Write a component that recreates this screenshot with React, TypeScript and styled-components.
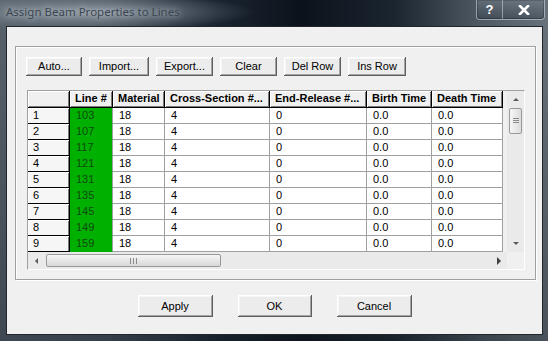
import React from 'react'
import styled, { createGlobalStyle } from 'styled-components'

const GlobalStyle = createGlobalStyle`
  html, body {
    margin: 0;
    padding: 0;
    background: #1d2731;
  }
  body {
    font-family: "Liberation Sans", Arial, sans-serif;
  }
`

type Row = { n: number; line: number }

const rows: Row[] = [
  { n: 1, line: 103 },
  { n: 2, line: 107 },
  { n: 3, line: 117 },
  { n: 4, line: 121 },
  { n: 5, line: 131 },
  { n: 6, line: 135 },
  { n: 7, line: 145 },
  { n: 8, line: 149 },
  { n: 9, line: 159 },
]

const headers = ['Line #', 'Material', 'Cross-Section #...', 'End-Release #...', 'Birth Time', 'Death Time']

const toolButtons = [
  { label: 'Auto...', w: 56 },
  { label: 'Import...', w: 60 },
  { label: 'Export...', w: 57 },
  { label: 'Clear', w: 57 },
  { label: 'Del Row', w: 57 },
  { label: 'Ins Row', w: 58 },
]

const Arrow: React.FC<{ dir: 'up' | 'down' | 'left' | 'right' }> = ({ dir }) => {
  const pts = {
    up: '1,5 4,2 7,5',
    down: '1,2 4,5 7,2',
    left: '5,1 2,4 5,7',
    right: '2,0 6,4 2,8',
  }[dir]
  return (
    <svg width="8" height="8" viewBox="0 0 8 8">
      <polygon points={pts} fill={dir === 'right' ? '#404040' : '#5a5a5a'} />
    </svg>
  )
}

export default function App() {
  return (
    <>
      <GlobalStyle />
      <Window>
        <TitleBar>
          <Title>Assign Beam Properties to Lines</Title>
          <Caption>
            <CapButton $w={25}>?</CapButton>
            <CapButton $w={41}>
              <svg width="12" height="10" viewBox="0 0 12 10">
                <path d="M2 1 L10 9 M10 1 L2 9" stroke="#fff" strokeWidth="2.6" strokeLinecap="square" />
              </svg>
            </CapButton>
          </Caption>
        </TitleBar>
        <Frame>
          <Client>
            <Group>
              <ToolRow>
                {toolButtons.map((b) => (
                  <Button key={b.label} $w={b.w} $h={19}>
                    {b.label}
                  </Button>
                ))}
              </ToolRow>
              <GridBox>
                <Table>
                  <HeadCell />
                  {headers.map((h) => (
                    <HeadCell key={h}>{h}</HeadCell>
                  ))}
                  {rows.map((r) => (
                    <React.Fragment key={r.n}>
                      <RowHead>{r.n}</RowHead>
                      <Cell $green>{r.line}</Cell>
                      <Cell>18</Cell>
                      <Cell>4</Cell>
                      <Cell>0</Cell>
                      <Cell>0.0</Cell>
                      <Cell>0.0</Cell>
                    </React.Fragment>
                  ))}
                </Table>
                <VScroll>
                  <ArrowBox>
                    <Arrow dir="up" />
                  </ArrowBox>
                  <VTrack>
                    <VThumb>
                      <svg width="6" height="6" viewBox="0 0 6 6">
                        <path d="M0 0.5 H6 M0 2.5 H6 M0 4.5 H6" stroke="#8a8a8a" strokeWidth="1" />
                      </svg>
                    </VThumb>
                  </VTrack>
                  <ArrowBox>
                    <Arrow dir="down" />
                  </ArrowBox>
                </VScroll>
                <HScroll>
                  <ArrowBox>
                    <Arrow dir="left" />
                  </ArrowBox>
                  <HTrack>
                    <HThumb>
                      <svg width="7" height="6" viewBox="0 0 7 6">
                        <path d="M0.5 0 V6 M3.5 0 V6 M6.5 0 V6" stroke="#8a8a8a" strokeWidth="1" />
                      </svg>
                    </HThumb>
                  </HTrack>
                  <ArrowBox>
                    <Arrow dir="right" />
                  </ArrowBox>
                </HScroll>
                <Corner />
              </GridBox>
            </Group>
            <FooterRow>
              <Button $w={75} $h={22}>Apply</Button>
              <Button $w={74} $h={22}>OK</Button>
              <Button $w={75} $h={22}>Cancel</Button>
            </FooterRow>
          </Client>
        </Frame>
      </Window>
    </>
  )
}

const Window = styled.div`
  width: 548px;
  height: 341px;
  box-sizing: border-box;
  display: flex;
  flex-direction: column;
  overflow: hidden;
  background: linear-gradient(
    90deg,
    #56616c 0%,
    #47525d 20%,
    #1a2430 40%,
    #0b121b 55%,
    #1b2530 72%,
    #4f5a64 88%,
    #66717a 100%
  );
`

const TitleBar = styled.div`
  height: 26px;
  flex: none;
  display: flex;
  justify-content: space-between;
  align-items: flex-start;
  padding: 0 3px 0 6px;
  box-sizing: border-box;
  position: relative;
  background: radial-gradient(ellipse 160px 18px at 95px 12px, rgba(190, 200, 210, 0.55), rgba(190, 200, 210, 0) 100%);
`

const Title = styled.div`
  font-family: "Noto Sans", "Open Sans", sans-serif;
  font-size: 11.5px;
  line-height: 24px;
  color: #3c4650;
  text-shadow: 0 0 6px rgba(230, 236, 240, 0.8);
  white-space: nowrap;
`

const Caption = styled.div`
  display: flex;
  height: 19px;
  border: 1px solid rgba(215, 225, 235, 0.55);
  border-top: none;
  border-radius: 0 0 4px 4px;
  overflow: hidden;
  box-shadow: inset 0 0 0 1px rgba(0, 0, 0, 0.35);
`

const CapButton = styled.div<{ $w: number }>`
  width: ${(p) => p.$w}px;
  height: 100%;
  display: flex;
  align-items: center;
  justify-content: center;
  color: #ffffff;
  font-family: "Liberation Sans", Arial, sans-serif;
  font-weight: bold;
  font-size: 13px;
  background: linear-gradient(180deg, rgba(120, 132, 144, 0.45), rgba(40, 50, 60, 0.4));
  & + & {
    border-left: 1px solid rgba(215, 225, 235, 0.5);
  }
`

const Frame = styled.div`
  flex: 1;
  display: flex;
  padding: 0 5px 6px 6px;
  background: linear-gradient(180deg, rgba(0, 0, 0, 0) 0%, rgba(20, 26, 34, 0.35) 100%);
`

const Client = styled.div`
  flex: 1;
  display: flex;
  flex-direction: column;
  background: #f0f0f0;
  border: 1px solid #20262c;
  padding: 19px 6px 0 8px;
`

const Group = styled.div`
  height: 234px;
  box-sizing: border-box;
  border: 1px solid #a0a0a0;
  box-shadow: inset 1px 1px 0 #ffffff, 1px 1px 0 #ffffff;
  padding: 10px 10px 9px 11px;
  display: flex;
  flex-direction: column;
  gap: 14px;
`

const ToolRow = styled.div`
  display: flex;
  gap: 7px;
  margin-left: -1px;
`

const Button = styled.div<{ $w: number; $h: number }>`
  width: ${(p) => p.$w}px;
  height: ${(p) => p.$h}px;
  box-sizing: border-box;
  display: flex;
  align-items: center;
  justify-content: center;
  font-size: 11px;
  color: #000;
  background: #ececec;
  box-shadow: inset -1px -1px 0 #5e5e5e, inset 1px 1px 0 #ffffff, inset -2px -2px 0 #a5a5a5, inset 2px 2px 0 #f6f6f6;
  padding-bottom: 1px;
`

const GridBox = styled.div`
  width: 498px;
  height: 180px;
  box-sizing: border-box;
  border: 1px solid;
  border-color: #a0a0a0 #ffffff #ffffff #a0a0a0;
  display: grid;
  grid-template-columns: 479px 17px;
  grid-template-rows: 161px 17px;
  background: #f0f0f0;
`

const Table = styled.div`
  display: grid;
  grid-template-columns: 42px 43px 52px 105px 97px 65px 71px;
  grid-template-rows: 17px repeat(9, 16px);
  align-content: start;
  overflow: hidden;
`

const HeadCell = styled.div`
  box-sizing: border-box;
  border-right: 1px solid #000;
  border-bottom: 1px solid #000;
  background: #f0f0f0;
  box-shadow: inset 1px 1px 0 #ffffff, inset -1px -1px 0 #7a7a7a;
  font-weight: bold;
  font-size: 11px;
  line-height: 15px;
  padding-left: 5px;
  white-space: nowrap;
  overflow: hidden;
`

const RowHead = styled.div`
  box-sizing: border-box;
  border-right: 1px solid #000;
  border-bottom: 1px solid #000;
  background: #f6f6f6;
  box-shadow: inset 1px 1px 0 #ffffff, inset -1px 0 0 #7a7a7a;
  font-size: 11px;
  line-height: 15px;
  padding-left: 5px;
`

const Cell = styled.div<{ $green?: boolean }>`
  box-sizing: border-box;
  border-right: 1px solid #a0a0a0;
  border-bottom: 1px solid ${(p) => (p.$green ? '#00b000' : '#a0a0a0')};
  background: ${(p) => (p.$green ? '#00b000' : '#ffffff')};
  color: ${(p) => (p.$green ? '#0d4a0d' : '#000')};
  font-size: 11px;
  line-height: 15px;
  padding-left: 6px;
  white-space: nowrap;
`

const VScroll = styled.div`
  display: flex;
  flex-direction: column;
  background: #eaeaea;
`

const HScroll = styled.div`
  display: flex;
  background: #eaeaea;
`

const ArrowBox = styled.div`
  width: 17px;
  height: 17px;
  flex: none;
  display: flex;
  align-items: center;
  justify-content: center;
`

const VTrack = styled.div`
  flex: 1;
  padding: 0 2px;
`

const VThumb = styled.div`
  height: 26px;
  box-sizing: border-box;
  border: 1px solid #9a9a9a;
  border-radius: 2px;
  background: linear-gradient(90deg, #f6f6f6, #dcdcdc);
  display: flex;
  align-items: center;
  justify-content: center;
`

const HTrack = styled.div`
  flex: 1;
  padding: 2px 0;
`

const HThumb = styled.div`
  width: 175px;
  height: 100%;
  box-sizing: border-box;
  border: 1px solid #9a9a9a;
  border-radius: 2px;
  background: linear-gradient(180deg, #f6f6f6, #d8d8d8);
  display: flex;
  align-items: center;
  justify-content: center;
  margin-left: 1px;
`

const Corner = styled.div`
  background: #f0f0f0;
`

const FooterRow = styled.div`
  display: flex;
  justify-content: center;
  gap: 25px;
  margin-top: 15px;
  margin-left: -2px;
`
